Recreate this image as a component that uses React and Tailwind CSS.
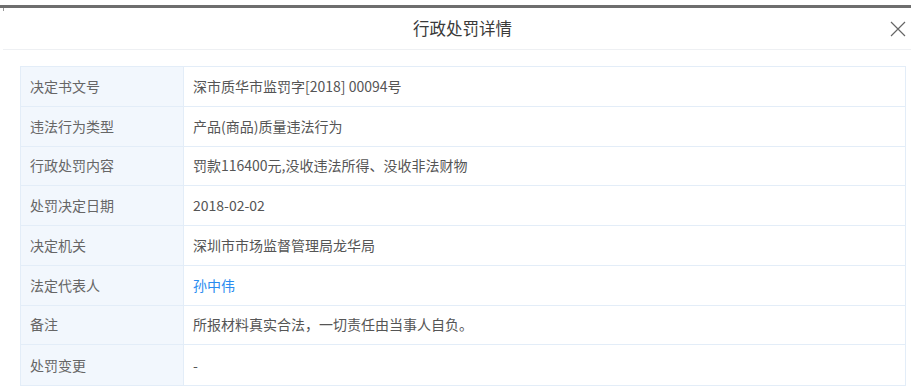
export default function App() {
  const rows = [
    ["决定书文号", "深市质华市监罚字[2018] 00094号"],
    ["违法行为类型", "产品(商品)质量违法行为"],
    ["行政处罚内容", "罚款116400元,没收违法所得、没收非法财物"],
    ["处罚决定日期", "2018-02-02"],
    ["决定机关", "深圳市市场监督管理局龙华局"],
    ["法定代表人", "孙中伟", true],
    ["备注", "所报材料真实合法，一切责任由当事人自负。"],
    ["处罚变更", "-"],
  ];
  return (
    <div
      className="w-[911px] h-[391px] overflow-hidden bg-white relative"
      style={{ fontFamily: '"Noto Sans CJK SC", "Liberation Sans", sans-serif' }}
    >
      <div className="h-[5px] bg-white" />
      <div className="h-[3px] bg-[#6e6e6e]" />
      <div className="absolute left-[3px] top-[8px] w-[1px] h-[3px] bg-[#999]" />
      <div className="ml-[3px] w-[919px]">
        <div className="h-[42px] border-b border-[#eef0f3] flex items-center justify-center relative">
          <span className="text-[16.5px] text-[#3a3a3a] leading-none">行政处罚详情</span>
          <svg
            className="absolute left-[887px] top-[13px]"
            width="16"
            height="16"
            viewBox="0 0 16 16"
          >
            <path d="M1 1 L15 15 M15 1 L1 15" stroke="#666" strokeWidth="1.2" fill="none" />
          </svg>
        </div>
        <div className="pt-[16px] pl-[17px]">
          <div className="w-[886px] border border-[#e3edf8]">
            {rows.map(([k, v, link], i) => (
              <div
                key={i}
                className={`flex h-[39.75px] ${i < rows.length - 1 ? "border-b border-[#e3edf8]" : ""}`}
              >
                <div className="w-[163px] bg-[#f2f7fd] border-r border-[#e3edf8] flex items-center pl-[9px] text-[14px] text-[#666]">
                  {k}
                </div>
                <div
                  className={`flex-1 flex items-center pl-[9px] text-[14px] ${
                    link ? "text-[#2a8cf0]" : "text-[#555]"
                  }`}
                >
                  {v}
                </div>
              </div>
            ))}
          </div>
        </div>
      </div>
    </div>
  );
}
